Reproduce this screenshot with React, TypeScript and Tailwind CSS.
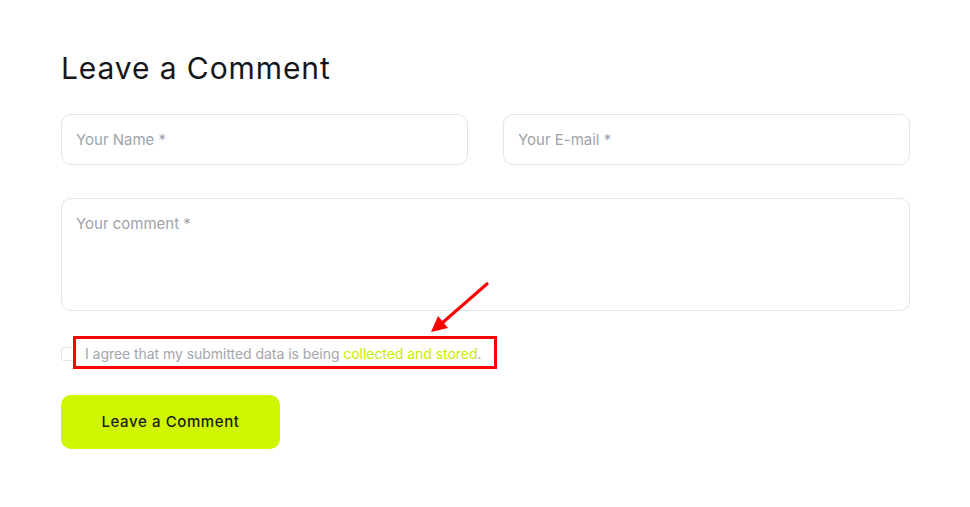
import React from "react";

export default function App() {
  return (
    <div className="relative w-[970px] h-[507px] bg-white" style={{ fontFamily: "Inter, 'Noto Sans', sans-serif" }}>
      <div className="pl-[61px] pt-[50px] w-[910px]">
        <h2 className="text-[30px] leading-[36px] font-normal text-[#15161c] tracking-[0.9px]">Leave a Comment</h2>
        <div className="mt-[28px] flex gap-[35px]">
          <div className="flex-1 h-[51px] rounded-[10px] border border-[#dde6ef] flex items-center pl-[14px] pt-[2px] text-[15px] text-[#9ea3ab]">Your Name *</div>
          <div className="flex-1 h-[51px] rounded-[10px] border border-[#dde6ef] flex items-center pl-[14px] pt-[2px] text-[15px] text-[#9ea3ab]">Your E-mail *</div>
        </div>
        <div className="mt-[33px] h-[113px] rounded-[10px] border border-[#dde6ef] pl-[14px] pt-[15px] text-[15px] leading-[20px] text-[#9ea3ab]">Your comment *</div>
        <div className="mt-[35px] flex items-center h-[16px] gap-[10px]">
          <div className="w-[14px] h-[14px] rounded-[3px] border border-[#dde6ef]" />
          <p className="text-[14px] text-[#a2a6ad] tracking-[-0.05px] -mt-[1px]">
            I agree that my submitted data is being <span className="text-[#c8ec00]">collected and stored</span>.
          </p>
        </div>
        <button className="mt-[33px] w-[219px] h-[54px] rounded-[10px] bg-[#d0f500] text-[15px] font-medium text-[#1a1b20] tracking-[0.6px]">Leave a Comment</button>
      </div>
      <div className="absolute left-[73px] top-[336px] w-[424px] h-[33px] border-[3px] border-[#ff0000]" />
      <svg className="absolute left-0 top-0" width="970" height="507">
        <line x1="488" y1="283" x2="441" y2="324" stroke="#ff0000" strokeWidth="3" />
        <polygon points="431,332 438,316 448,328" fill="#ff0000" />
      </svg>
    </div>
  );
}
